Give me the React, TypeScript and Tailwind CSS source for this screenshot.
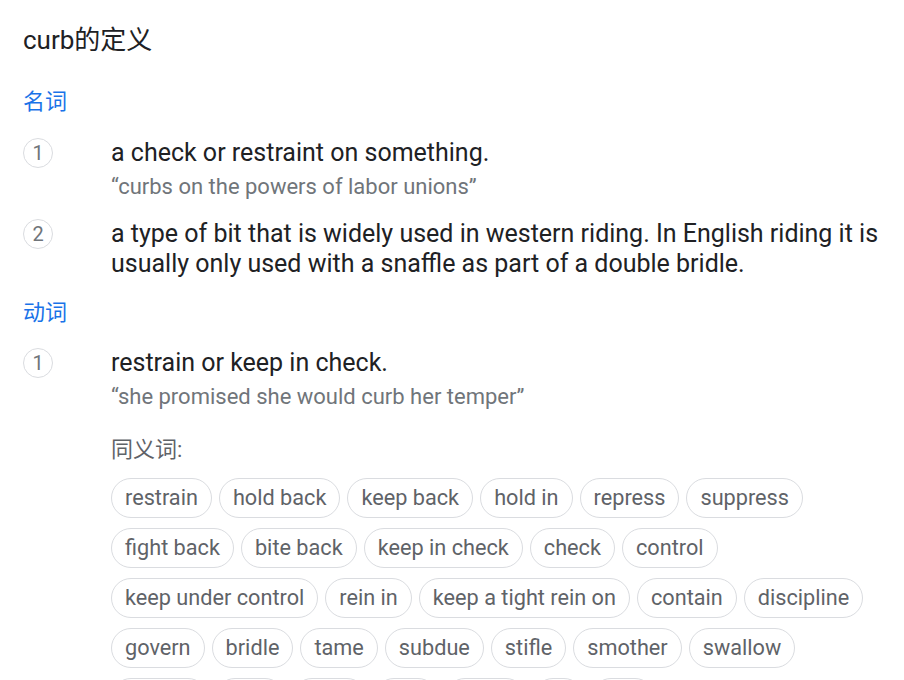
import React from 'react';

const sans = '[font-family:Roboto,"Noto_Sans_CJK_SC",sans-serif]';

const synonyms = [
  'restrain', 'hold back', 'keep back', 'hold in', 'repress', 'suppress',
  'fight back', 'bite back', 'keep in check', 'check', 'control',
  'keep under control', 'rein in', 'keep a tight rein on', 'contain', 'discipline',
  'govern', 'bridle', 'tame', 'subdue', 'stifle', 'smother', 'swallow',
  'muzzle', 'limit', 'quell', 'gag', 'lower', 'tie', 'cap',
];

function Num({ n }: { n: number }) {
  return (
    <div className="w-[30px] h-[30px] rounded-full border border-[#dadce0] flex items-center justify-center text-[20px] text-[#70757a] leading-none">
      {n}
    </div>
  );
}

function Sense({ n, def, example, children }: { n: number; def: string; example?: string; children?: React.ReactNode }) {
  return (
    <div className="grid grid-cols-[88px_1fr]">
      <div>
        <Num n={n} />
      </div>
      <div>
        <div className="text-[25px] leading-[30px] text-[#202124]">{def}</div>
        {example && <div className="mt-[5px] text-[22px] leading-[28px] text-[#70757a]">{example}</div>}
        {children}
      </div>
    </div>
  );
}

export default function App() {
  return (
    <div className={`${sans} bg-white w-[904px] h-[680px] overflow-hidden pl-[23px] pr-[23px] pt-6`}>
      <h1 className="text-[26px] leading-[32px] text-[#202124]">curb的定义</h1>

      <div className="mt-8 text-[22px] leading-[28px] text-[#1a73e8]">名词</div>
      <div className="mt-[22px] flex flex-col gap-[18px]">
        <Sense n={1} def="a check or restraint on something." example="“curbs on the powers of labor unions”" />
        <Sense
          n={2}
          def="a type of bit that is widely used in western riding. In English riding it is usually only used with a snaffle as part of a double bridle."
        />
      </div>

      <div className="mt-5 text-[22px] leading-[28px] text-[#1a73e8]">动词</div>
      <div className="mt-[21px]">
        <Sense n={1} def="restrain or keep in check." example="“she promised she would curb her temper”">
          <div className="mt-[25px] text-[22px] leading-[28px] text-[#5f6368]">同义词:</div>
          <div className="mt-[14px] flex flex-wrap gap-x-[7px] gap-y-[10px]">
            {synonyms.map((s) => (
              <span
                key={s}
                className="h-[40px] px-[13px] rounded-full border border-[#dadce0] flex items-center text-[21.7px] text-[#5f6368]"
              >
                {s}
              </span>
            ))}
          </div>
        </Sense>
      </div>
    </div>
  );
}
